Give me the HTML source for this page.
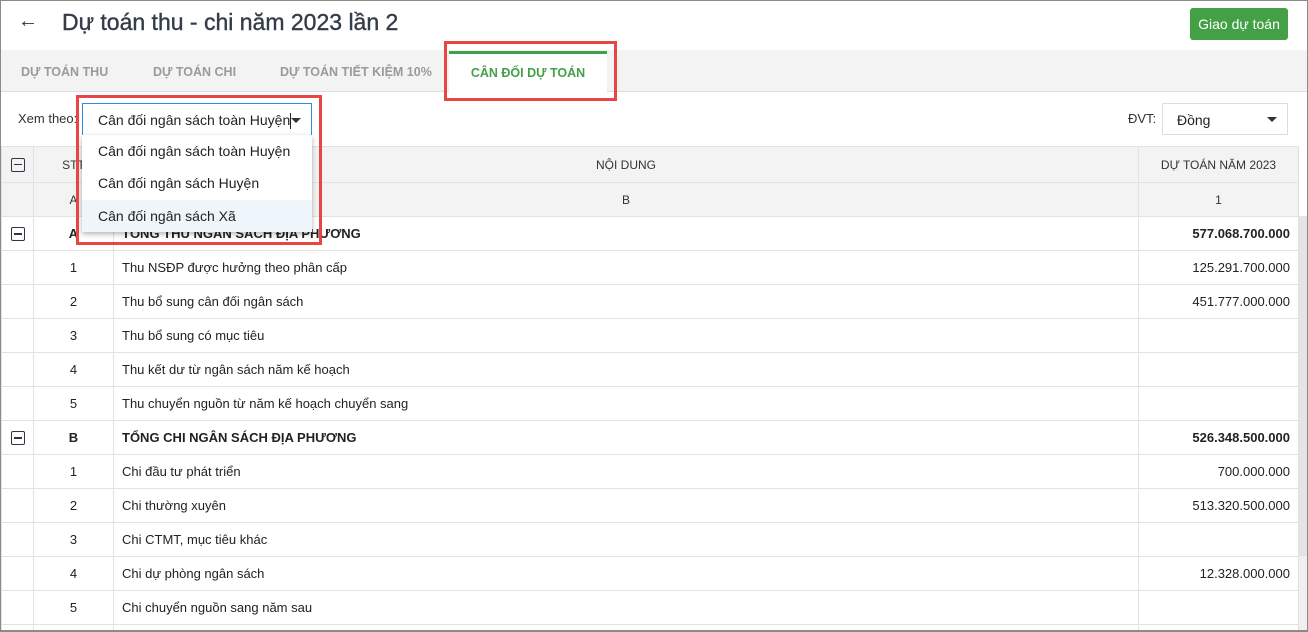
<!DOCTYPE html>
<html style="width:1308px;height:632px;overflow:hidden"><head><meta charset="utf-8"><style>
*{box-sizing:border-box;margin:0;padding:0}
body{width:1308px;height:632px;overflow:hidden;background:#fff;font-family:"Liberation Sans",Arial,sans-serif;color:#222;position:relative}
.wrap{position:absolute;left:0;top:0;width:1308px;height:632px;overflow:hidden}
.frame{position:absolute;inset:0;border:1px solid #8a8a8a;border-bottom:2px solid #8a8a8a;pointer-events:none;z-index:50}
.abs{position:absolute}
.title{left:62px;top:9px;font-size:23px;color:#333d4a;-webkit-text-stroke:0.4px #333d4a}
.back{left:18px;top:10px;font-size:20px;color:#333}
.btn{left:1190px;top:8px;width:98px;height:32px;background:#43a047;color:#fff;border-radius:3px;font-size:14px;text-align:center;line-height:32px}
.tabs{left:1px;top:50px;width:1306px;height:42px;background:#f3f3f3;border-bottom:1px solid #ddd}
.tab{position:absolute;top:15px;font-size:12.5px;color:#9a9a9a;font-weight:bold}
.act{left:449px;top:51px;width:158px;height:41px;background:#fff;border-top:3px solid #43a047;color:#43a047;font-weight:bold;font-size:12.5px;text-align:center;line-height:38px}
.red{border:3px solid #e84545;z-index:40}
.sel{left:82px;top:103px;width:230px;height:33px;border:1px solid #2a8ce6;font-size:14px;padding:8px 15px;color:#222;background:#fff;z-index:30}
.caret{width:0;height:0;border-left:5px solid transparent;border-right:5px solid transparent;border-top:5px solid #333}
.menu{left:82px;top:135px;width:230px;height:97px;background:#fff;box-shadow:0 2px 5px rgba(0,0,0,.3);z-index:30;font-size:14px}
.menu div{height:32.3px;line-height:32px;padding-left:16px}
table{position:absolute;left:1px;top:146px;border-collapse:collapse;table-layout:fixed;font-size:13px}
td{border:1px solid #e2e2e2;height:34px;padding:0 8px}
.h td{background:#f3f3f3;font-size:12px;color:#333}
.c{text-align:center}.r{text-align:right}
.box{display:inline-block;width:14px;height:14px;border:1.5px solid #334;border-radius:2px;position:relative;vertical-align:middle}
.box:after{content:"";position:absolute;left:2px;right:2px;top:5px;height:1.5px;background:#334}
b{font-weight:bold}
</style></head><body><div class="wrap">
<div class="frame"></div>
<div class="abs back">←</div>
<div class="abs title">Dự toán thu - chi năm 2023 lần 2</div>
<div class="abs btn">Giao dự toán</div>
<div class="abs tabs">
<span class="tab" style="left:20px">DỰ TOÁN THU</span>
<span class="tab" style="left:152px">DỰ TOÁN CHI</span>
<span class="tab" style="left:279px">DỰ TOÁN TIẾT KIỆM 10%</span>
</div>
<div class="abs act">CÂN ĐỐI DỰ TOÁN</div>
<div class="abs red" style="left:444px;top:41px;width:173px;height:60px"></div>
<div class="abs" style="left:18px;top:111px;font-size:13px;color:#333">Xem theo:</div>
<div class="abs sel">Cân đối ngân sách toàn Huyện<span style="display:inline-block;width:1px;height:16px;background:#222;vertical-align:middle"></span><div class="abs caret" style="left:208px;top:14px"></div></div>
<div class="abs menu"><div>Cân đối ngân sách toàn Huyện</div><div>Cân đối ngân sách Huyện</div><div style="background:#eef6fb">Cân đối ngân sách Xã</div></div>
<div class="abs red" style="left:76px;top:95px;width:246px;height:150px"></div>
<div class="abs" style="left:1128px;top:111px;font-size:13px;color:#333">ĐVT:</div>
<div class="abs" style="left:1162px;top:103px;width:126px;height:32px;border:1px solid #ddd;font-size:14px;padding:8px 14px">Đồng<div class="abs caret" style="left:104px;top:13px"></div></div>
<div class="abs" style="left:1298px;top:216px;width:9px;height:414px;background:#f0f0f0"></div>
<div class="abs" style="left:1298px;top:216px;width:9px;height:340px;background:#e4e4e4"></div>
<table>
<colgroup><col style="width:32px"><col style="width:80px"><col style="width:1025px"><col style="width:160px"></colgroup>
<tr class="h"><td class="c" style="height:36px"><span class="box"></span></td><td class="c">STT</td><td class="c">NỘI DUNG</td><td class="c">DỰ TOÁN NĂM 2023</td></tr>
<tr class="h"><td></td><td class="c">A</td><td class="c">B</td><td class="c">1</td></tr>
<tr><td class="c"><span class="box"></span></td><td class="c"><b>A</b></td><td><b>TỔNG THU NGÂN SÁCH ĐỊA PHƯƠNG</b></td><td class="r"><b>577.068.700.000</b></td></tr>
<tr><td></td><td class="c">1</td><td>Thu NSĐP được hưởng theo phân cấp</td><td class="r">125.291.700.000</td></tr>
<tr><td></td><td class="c">2</td><td>Thu bổ sung cân đối ngân sách</td><td class="r">451.777.000.000</td></tr>
<tr><td></td><td class="c">3</td><td>Thu bổ sung có mục tiêu</td><td></td></tr>
<tr><td></td><td class="c">4</td><td>Thu kết dư từ ngân sách năm kế hoạch</td><td></td></tr>
<tr><td></td><td class="c">5</td><td>Thu chuyển nguồn từ năm kế hoạch chuyển sang</td><td></td></tr>
<tr><td class="c"><span class="box"></span></td><td class="c"><b>B</b></td><td><b>TỔNG CHI NGÂN SÁCH ĐỊA PHƯƠNG</b></td><td class="r"><b>526.348.500.000</b></td></tr>
<tr><td></td><td class="c">1</td><td>Chi đầu tư phát triển</td><td class="r">700.000.000</td></tr>
<tr><td></td><td class="c">2</td><td>Chi thường xuyên</td><td class="r">513.320.500.000</td></tr>
<tr><td></td><td class="c">3</td><td>Chi CTMT, mục tiêu khác</td><td></td></tr>
<tr><td></td><td class="c">4</td><td>Chi dự phòng ngân sách</td><td class="r">12.328.000.000</td></tr>
<tr><td></td><td class="c">5</td><td>Chi chuyển nguồn sang năm sau</td><td></td></tr>
<tr><td></td><td></td><td></td><td></td></tr>
</table>
</div></body></html>
